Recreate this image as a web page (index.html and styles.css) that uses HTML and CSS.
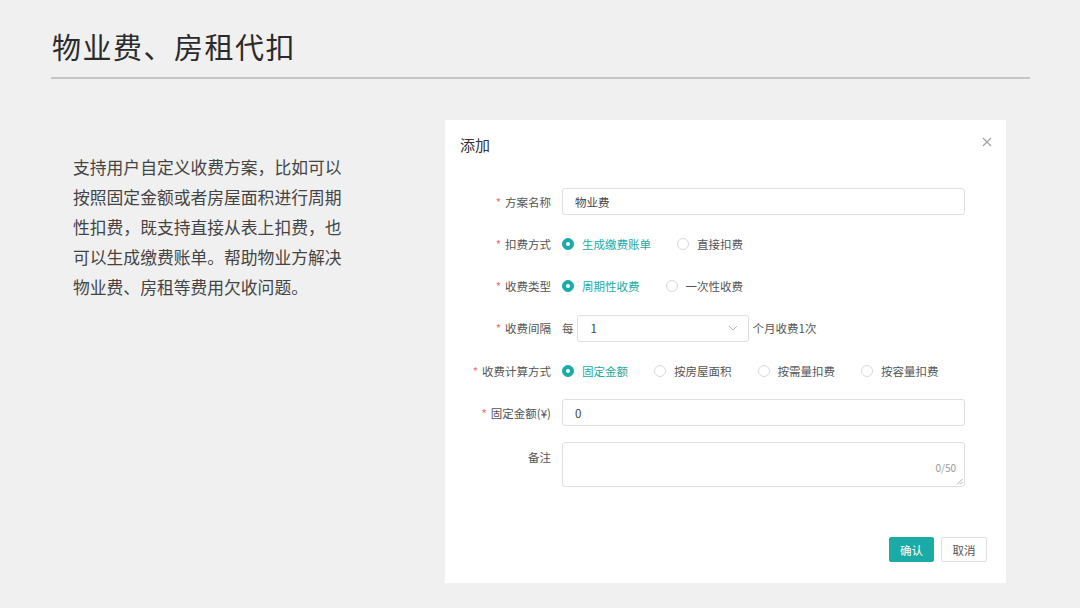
FILE: index.html
```html
<!DOCTYPE html>
<html lang="zh-CN">
<head>
<meta charset="utf-8">
<link rel="stylesheet" href="styles.css">
</head>
<body>
<div class="page">
  <header class="head">
    <h1 class="title">物业费、房租代扣</h1>
  </header>
  <main class="content">
    <p class="desc">支持用户自定义收费方案，比如可以按照固定金额或者房屋面积进行周期性扣费，既支持直接从表上扣费，也可以生成缴费账单。帮助物业方解决物业费、房租等费用欠收问题。</p>
    <section class="dialog">
      <div class="dlg-head">
        <span class="dlg-title">添加</span>
        <svg class="close" width="10" height="10" viewBox="0 0 10 10"><path d="M1 1L9 9M9 1L1 9" stroke="#a0a0a0" stroke-width="1.1" fill="none"/></svg>
      </div>
      <div class="form">
        <div class="row">
          <label class="lbl req">方案名称</label>
          <div class="ctrl"><div class="input">物业费</div></div>
        </div>
        <div class="row">
          <label class="lbl req">扣费方式</label>
          <div class="ctrl radios">
            <span class="radio on"><i></i>生成缴费账单</span>
            <span class="radio"><i></i>直接扣费</span>
          </div>
        </div>
        <div class="row">
          <label class="lbl req">收费类型</label>
          <div class="ctrl radios">
            <span class="radio on"><i></i>周期性收费</span>
            <span class="radio"><i></i>一次性收费</span>
          </div>
        </div>
        <div class="row">
          <label class="lbl req">收费间隔</label>
          <div class="ctrl inline">
            <span class="pre">每</span>
            <div class="select"><span>1</span>
              <svg width="10" height="6" viewBox="0 0 10 6"><path d="M1 1L5 5L9 1" stroke="#b8b8b8" stroke-width="1" fill="none"/></svg>
            </div>
            <span class="post">个月收费1次</span>
          </div>
        </div>
        <div class="row">
          <label class="lbl req">收费计算方式</label>
          <div class="ctrl radios">
            <span class="radio on"><i></i>固定金额</span>
            <span class="radio"><i></i>按房屋面积</span>
            <span class="radio"><i></i>按需量扣费</span>
            <span class="radio"><i></i>按容量扣费</span>
          </div>
        </div>
        <div class="row">
          <label class="lbl req">固定金额(¥)</label>
          <div class="ctrl"><div class="input">0</div></div>
        </div>
        <div class="row row-ta">
          <label class="lbl">备注</label>
          <div class="ctrl"><div class="textarea"><span class="count">0/50</span>
            <svg class="grip" width="7" height="7" viewBox="0 0 7 7"><path d="M1 6.5L6.5 1M4 6.5L6.5 4" stroke="#999" stroke-width="0.8" fill="none"/></svg>
          </div></div>
        </div>
      </div>
      <div class="dlg-foot">
        <button class="btn primary">确认</button>
        <button class="btn">取消</button>
      </div>
    </section>
  </main>
</div>
</body>
</html>
```
FILE: styles.css
```css
* { box-sizing: border-box; }
html, body { margin: 0; padding: 0; }
body {
  width: 1080px;
  height: 608px;
  overflow: hidden;
  background: #f0f0f0;
  font-family: "Noto Sans CJK SC", "Noto Sans", sans-serif;
  color: #333;
}
.page { padding: 0 50px 0 51px; }
.head {
  height: 79px;
  border-bottom: 2px solid #c6c6c6;
  display: flex;
  align-items: flex-start;
}
.title {
  margin: 27px 0 0 1px;
  font-size: 29px;
  line-height: 38px;
  font-weight: 400;
  color: #2b2b2b;
  letter-spacing: 1.5px;
}
.content {
  display: flex;
  align-items: flex-start;
}
.desc {
  width: 280px;
  margin: 73px 0 0 22px;
  font-size: 16.8px;
  line-height: 30px;
  color: #444;
}
.dialog {
  margin: 41px 0 0 92px;
  width: 561px;
  height: 463px;
  background: #fff;
  display: flex;
  flex-direction: column;
}
.dlg-head {
  display: flex;
  justify-content: space-between;
  align-items: center;
  padding: 0 14px 0 15px;
  height: 48px;
}
.dlg-title { font-size: 15px; color: #333; line-height: 20px; margin-top: 2px; }
.close { margin-top: -4px; }
.form {
  padding: 20px 41px 0 0;
  display: flex;
  flex-direction: column;
  gap: 15.3px;
}
.row {
  display: flex;
  align-items: center;
  height: 27px;
  font-size: 11.5px;
}
.row-ta { height: 45px; align-items: flex-start; }
.row-ta .lbl { padding-top: 7px; }
.lbl {
  width: 106px;
  text-align: right;
  color: #555;
  margin-right: 11px;
  white-space: nowrap;
}
.lbl.req::before { content: "*"; color: #f56c6c; margin-right: 4px; }
.ctrl { flex: 1; display: flex; align-items: center; height: 100%; }
.input {
  width: 100%;
  height: 27px;
  border: 1px solid #dcdfe6;
  border-radius: 3px;
  padding: 0 12px;
  display: flex;
  align-items: center;
  color: #444;
}
.radios .radio {
  display: inline-flex;
  align-items: center;
  margin-right: 26px;
  color: #555;
  white-space: nowrap;
}
.radio i {
  display: inline-block;
  width: 12px;
  height: 12px;
  border: 1px solid #d6d9de;
  border-radius: 50%;
  margin-right: 8px;
}
.radio.on { color: #1aaba7; }
.radio.on i {
  background: #1aaba7;
  border-color: #1aaba7;
  position: relative;
}
.radio.on i::after {
  content: "";
  position: absolute;
  left: 3px; top: 3px;
  width: 4px; height: 4px;
  background: #fff;
  border-radius: 50%;
}
.inline .pre { margin-right: 3px; color: #555; }
.select {
  width: 172px;
  height: 27px;
  border: 1px solid #dcdfe6;
  border-radius: 3px;
  display: flex;
  align-items: center;
  justify-content: space-between;
  padding: 0 10px 0 13px;
  color: #444;
}
.inline .post { margin-left: 4px; color: #555; }
.textarea {
  position: relative;
  width: 100%;
  height: 45px;
  border: 1px solid #dcdfe6;
  border-radius: 3px;
}
.count {
  position: absolute;
  right: 8px;
  bottom: 11px;
  font-size: 10px;
  color: #999;
}
.grip { position: absolute; right: 1px; bottom: 1px; }
.dlg-foot {
  margin-top: auto;
  display: flex;
  justify-content: flex-end;
  gap: 7px;
  padding: 0 19px 21px 0;
}
.btn {
  height: 25px;
  width: 46px;
  border: 1px solid #dcdfe6;
  border-radius: 2px;
  background: #fff;
  color: #555;
  font-family: inherit;
  font-size: 11.5px;
  padding: 0;
}
.btn.primary {
  width: 45px;
  background: #1aaba7;
  border-color: #1aaba7;
  color: #fff;
}
```
